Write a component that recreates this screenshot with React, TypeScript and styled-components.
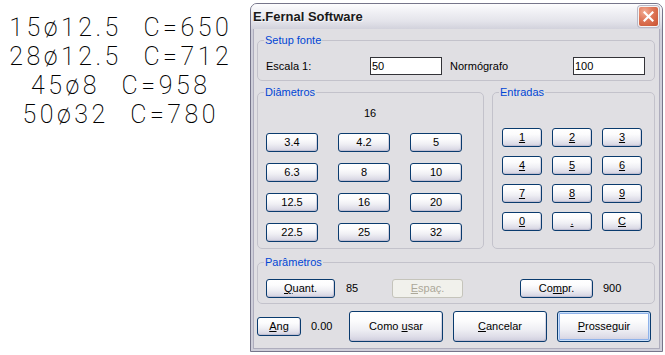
import React from "react";
import styled, { createGlobalStyle, css } from "styled-components";

const GlobalStyle = createGlobalStyle`
  html, body { margin: 0; padding: 0; background: #ffffff; }
  body { width: 665px; height: 355px; overflow: hidden; font-family: "Liberation Sans", Arial, sans-serif; }
`;

const Page = styled.div`
  display: flex;
  align-items: flex-start;
  width: 665px;
  height: 355px;
`;

const Drawing = styled.div`
  width: 238px;
  padding-top: 13px;
  display: flex;
  flex-direction: column;
  align-items: center;
  font-family: Roboto, "DejaVu Sans", sans-serif;
  font-weight: 200;
  font-size: 25px;
  line-height: 29px;
  letter-spacing: 3.5px;
  word-spacing: 12px;
  color: #000;
  white-space: pre;
`;

const DrawLine = styled.div`
  margin-right: -3.5px;
`;

const Window = styled.div`
  margin: 3px 0 0 12px;
  width: 413px;
  height: 349px;
  box-sizing: border-box;
  border: 1px solid #76758a;
  border-radius: 7px 7px 0 0;
  background: #cfcfda;
  display: flex;
  flex-direction: column;
  overflow: hidden;
`;

const TitleBar = styled.div`
  height: 25px;
  flex: none;
  display: flex;
  align-items: center;
  justify-content: space-between;
  padding: 0 3px 0 2px;
  background: linear-gradient(180deg, #fdfdfe 0%, #f1f1f5 30%, #e3e3ea 70%, #d2d2dc 100%);
`;

const Title = styled.span`
  font-family: "Liberation Sans", Arial, sans-serif;
  font-weight: bold;
  font-size: 13px;
  color: #1a1a1a;
  text-shadow: 1px 1px 0 rgba(255, 255, 255, 0.6);
`;

const CloseButton = styled.div`
  width: 21px;
  height: 21px;
  box-sizing: border-box;
  border: 1px solid #f4f4f4;
  border-radius: 3px;
  background: radial-gradient(circle at 30% 25%, #f3ad94 0%, #e07a5c 40%, #c9502f 100%);
  box-shadow: 0 0 0 1px #b9b8c6;
  display: flex;
  align-items: center;
  justify-content: center;
`;

const Frame = styled.div`
  flex: 1;
  display: flex;
  padding: 0 2px 2px;
`;

const Client = styled.div`
  flex: 1;
  display: flex;
  flex-direction: column;
  background: #e0dfe3;
  border: 1px solid #aeadbd;
  border-top: none;
  padding: 4px 4px 6px 3px;
  font-family: "Liberation Sans", Arial, sans-serif;
  font-size: 11px;
  color: #000;
`;

const Group = styled.fieldset<{ $width?: number }>`
  margin: 0;
  padding: 0;
  min-width: 0;
  border: 1px solid #c3c2cb;
  border-radius: 5px;
  ${(p) => (p.$width ? css`width: ${p.$width}px; flex: none;` : css`flex: 1;`)}
  box-sizing: border-box;
`;

const Legend = styled.legend`
  margin-left: 6px;
  padding: 0 1px;
  font-size: 11px;
  line-height: 14px;
  color: #0046d5;
`;

const SetupRow = styled.div`
  display: flex;
  align-items: center;
  padding: 10px 9px 4px 8px;
`;

const FieldLabel = styled.span<{ $w?: number }>`
  ${(p) => (p.$w ? css`width: ${p.$w}px;` : css`flex: 1; margin-left: 8px;`)}
  line-height: 13px;
`;

const TextBox = styled.input`
  box-sizing: border-box;
  width: 72px;
  height: 18px;
  border: 1px solid #333338;
  padding: 0 1px;
  background: #fff;
  font-family: "Liberation Sans", Arial, sans-serif;
  font-size: 11px;
  color: #000;
  outline: none;
`;

const GroupsRow = styled.div`
  display: flex;
  gap: 8px;
  margin-top: 4px;
`;

const DiamBody = styled.div`
  padding: 8px 0 6px 8px;
`;

const Readout = styled.div`
  padding-left: 98px;
  line-height: 13px;
  margin-bottom: 13px;
`;

const ButtonGrid = styled.div<{ $col: number; $cgap: number; $rgap: number }>`
  display: grid;
  grid-template-columns: repeat(3, ${(p) => p.$col}px);
  grid-auto-rows: 19px;
  column-gap: ${(p) => p.$cgap}px;
  row-gap: ${(p) => p.$rgap}px;
`;

const KeysBody = styled.div`
  padding: 29px 0 0 9px;
`;

const ParamsGroup = styled(Group)`
  margin-top: 6px;
`;

const ParamRow = styled.div`
  display: flex;
  align-items: center;
  padding: 10px 0 5px 8px;
`;

const Value = styled.span<{ $gap: number; $w?: number }>`
  margin-left: ${(p) => p.$gap}px;
  ${(p) => p.$w && css`width: ${p.$w}px;`}
  line-height: 13px;
`;

const Spacer = styled.span<{ $w: number }>`
  width: ${(p) => p.$w}px;
  flex: none;
`;

const ActionRow = styled.div`
  display: flex;
  align-items: center;
  gap: 10px;
  margin-top: 7px;
  height: 31px;
`;

const AngValue = styled.span`
  width: 28px;
  line-height: 13px;
`;

const Button = styled.button<{ $w: number; $h?: number; $primary?: boolean }>`
  box-sizing: border-box;
  flex: none;
  width: ${(p) => p.$w}px;
  height: ${(p) => p.$h ?? 19}px;
  padding: 0;
  margin: 0;
  border: 1px solid #0a3b6e;
  border-radius: 3px;
  background: linear-gradient(180deg, #ffffff 0%, #fcfcfd 30%, #efeff4 60%, #dedde8 85%, #cfcedd 100%);
  box-shadow: inset -1px -1px 0 rgba(170, 168, 196, 0.45);
  font-family: "Liberation Sans", Arial, sans-serif;
  font-size: 11px;
  line-height: 13px;
  color: #000;
  text-align: center;
  cursor: default;
  ${(p) =>
    p.$primary &&
    css`
      box-shadow: inset 0 0 0 1px #c9dff9, inset 0 0 0 2px #8fb2ea;
    `}
  &:disabled {
    border-color: #c5c4bb;
    background: #f1f1ec;
    box-shadow: none;
    color: #aca899;
  }
`;

const U = styled.span`
  text-decoration: underline;
`;

const diameters = ["3.4", "4.2", "5", "6.3", "8", "10", "12.5", "16", "20", "22.5", "25", "32"];
const keys = ["1", "2", "3", "4", "5", "6", "7", "8", "9", "0", ".", "C"];

export default function App() {
  return (
    <>
      <GlobalStyle />
      <Page>
        <Drawing>
          <DrawLine>15ø12.5 C=650</DrawLine>
          <DrawLine>28ø12.5 C=712</DrawLine>
          <DrawLine>45ø8 C=958</DrawLine>
          <DrawLine>50ø32 C=780</DrawLine>
        </Drawing>
        <Window>
          <TitleBar>
            <Title>E.Fernal Software</Title>
            <CloseButton>
              <svg width="11" height="11" viewBox="0 0 11 11">
                <path d="M1.5 1.5 L9.5 9.5 M9.5 1.5 L1.5 9.5" stroke="#ffffff" strokeWidth="2.2" strokeLinecap="square" />
              </svg>
            </CloseButton>
          </TitleBar>
          <Frame>
            <Client>
              <Group>
                <Legend>Setup fonte</Legend>
                <SetupRow>
                  <FieldLabel $w={104}>Escala 1:</FieldLabel>
                  <TextBox defaultValue="50" />
                  <FieldLabel>Normógrafo</FieldLabel>
                  <TextBox defaultValue="100" />
                </SetupRow>
              </Group>
              <GroupsRow>
                <Group $width={227}>
                  <Legend>Diâmetros</Legend>
                  <DiamBody>
                    <Readout>16</Readout>
                    <ButtonGrid $col={52} $cgap={20} $rgap={11}>
                      {diameters.map((d) => (
                        <Button key={d} $w={52}>
                          {d}
                        </Button>
                      ))}
                    </ButtonGrid>
                  </DiamBody>
                </Group>
                <Group>
                  <Legend>Entradas</Legend>
                  <KeysBody>
                    <ButtonGrid $col={40} $cgap={10} $rgap={9}>
                      {keys.map((k) => (
                        <Button key={k} $w={40}>
                          <U>{k}</U>
                        </Button>
                      ))}
                    </ButtonGrid>
                  </KeysBody>
                </Group>
              </GroupsRow>
              <ParamsGroup>
                <Legend>Parâmetros</Legend>
                <ParamRow>
                  <Button $w={69}>
                    <U>Q</U>uant.
                  </Button>
                  <Value $gap={11} $w={46}>
                    85
                  </Value>
                  <Button $w={71} disabled>
                    <U>E</U>spaç.
                  </Button>
                  <Spacer $w={57} />
                  <Button $w={73}>
                    Co<U>m</U>pr.
                  </Button>
                  <Value $gap={10}>900</Value>
                </ParamRow>
              </ParamsGroup>
              <ActionRow>
                <Button $w={44}>
                  <U>A</U>ng
                </Button>
                <AngValue>0.00</AngValue>
                <Button $w={94} $h={31}>
                  Como <U>u</U>sar
                </Button>
                <Button $w={94} $h={31}>
                  <U>C</U>ancelar
                </Button>
                <Button $w={94} $h={31} $primary>
                  <U>P</U>rosseguir
                </Button>
              </ActionRow>
            </Client>
          </Frame>
        </Window>
      </Page>
    </>
  );
}
